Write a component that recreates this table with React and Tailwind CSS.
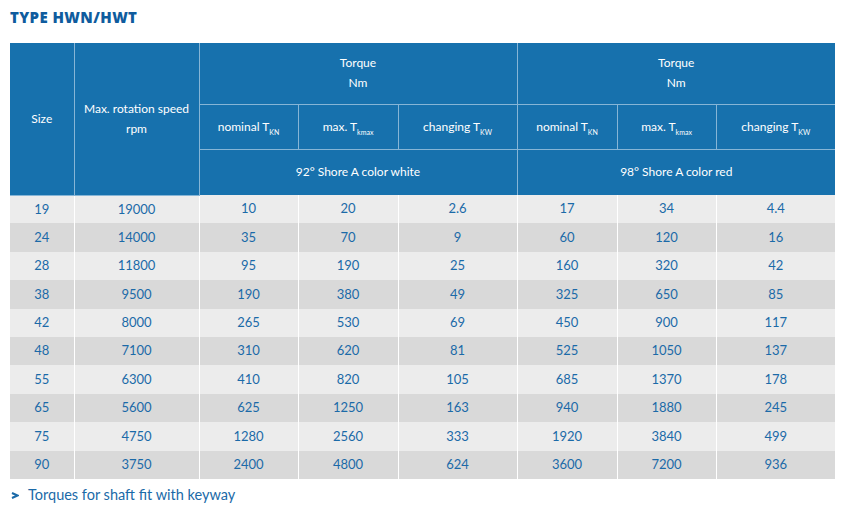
import React from "react";

const rows = [
  ["19", "19000", "10", "20", "2.6", "17", "34", "4.4"],
  ["24", "14000", "35", "70", "9", "60", "120", "16"],
  ["28", "11800", "95", "190", "25", "160", "320", "42"],
  ["38", "9500", "190", "380", "49", "325", "650", "85"],
  ["42", "8000", "265", "530", "69", "450", "900", "117"],
  ["48", "7100", "310", "620", "81", "525", "1050", "137"],
  ["55", "6300", "410", "820", "105", "685", "1370", "178"],
  ["65", "5600", "625", "1250", "163", "940", "1880", "245"],
  ["75", "4750", "1280", "2560", "333", "1920", "3840", "499"],
  ["90", "3750", "2400", "4800", "624", "3600", "7200", "936"],
];

const widths = [64, 125, 99, 100, 119, 100, 99, 119];

function T({ label, sub }) {
  return (
    <span>
      {label} T<span className="relative top-[4px] text-[7px]">{sub}</span>
    </span>
  );
}

const hb = "border border-[#86b5d6]";

export default function App() {
  return (
    <div
      className="w-[854px] h-[507px] bg-white relative"
      style={{ fontFamily: "Lato, 'Noto Sans', sans-serif" }}
    >
      <div
        className="pt-[7px] pl-[10px] text-[15px] font-extrabold text-[#0f5c9e] tracking-[0.4px] leading-[20px]"
        style={{ fontFamily: "'Open Sans', 'Noto Sans', sans-serif" }}
      >
        TYPE HWN/HWT
      </div>
      <div className="pl-[10px] pt-[16px]">
        <table className="table-fixed border-collapse w-[825px] text-center">
          <colgroup>
            {widths.map((w, i) => (
              <col key={i} style={{ width: w }} />
            ))}
          </colgroup>
          <thead className="bg-[#1771ad] text-white text-[12px] font-light">
            <tr className="h-[61px]">
              <th rowSpan={3} className={`${hb} border-l-0 border-t-0 font-normal`}>
                Size
              </th>
              <th rowSpan={3} className={`${hb} border-t-0 font-normal leading-[20px]`}>
                Max. rotation speed
                <br />
                rpm
              </th>
              <th colSpan={3} className={`${hb} border-t-0 font-normal leading-[20px]`}>
                Torque
                <br />
                Nm
              </th>
              <th colSpan={3} className={`${hb} border-t-0 border-r-0 font-normal leading-[20px]`}>
                Torque
                <br />
                Nm
              </th>
            </tr>
            <tr className="h-[45px]">
              <th className={`${hb} font-normal`}>
                <T label="nominal" sub="KN" />
              </th>
              <th className={`${hb} font-normal`}>
                <T label="max." sub="kmax" />
              </th>
              <th className={`${hb} font-normal`}>
                <T label="changing" sub="KW" />
              </th>
              <th className={`${hb} font-normal`}>
                <T label="nominal" sub="KN" />
              </th>
              <th className={`${hb} font-normal`}>
                <T label="max." sub="kmax" />
              </th>
              <th className={`${hb} border-r-0 font-normal`}>
                <T label="changing" sub="KW" />
              </th>
            </tr>
            <tr className="h-[46px]">
              <th colSpan={3} className={`${hb} border-b-0 font-normal`}>
                92° Shore A color white
              </th>
              <th colSpan={3} className={`${hb} border-b-0 border-r-0 font-normal`}>
                98° Shore A color red
              </th>
            </tr>
          </thead>
          <tbody className="text-[13px] text-[#1b6aa8]">
            {rows.map((r, i) => (
              <tr
                key={i}
                className={`h-[28.4px] ${i % 2 === 0 ? "bg-[#ececec]" : "bg-[#d9d9d9]"}`}
              >
                {r.map((c, j) => (
                  <td key={j} className={`p-0 ${j < 7 ? "border-r border-white" : ""}`}>
                    {c}
                  </td>
                ))}
              </tr>
            ))}
          </tbody>
        </table>
      </div>
      <div className="flex items-center pl-[11px] pt-[6px] text-[14.5px] text-[#1b6aa8] leading-[20px]">
        <svg width="8" height="7" viewBox="0 0 8 7" className="mr-[9px] mt-[2px]">
          <path d="M1 1 L6.5 3.5 L1 6" fill="none" stroke="#1b6aa8" strokeWidth="2" strokeLinejoin="miter" />
        </svg>
        Torques for shaft fit with keyway
      </div>
    </div>
  );
}
